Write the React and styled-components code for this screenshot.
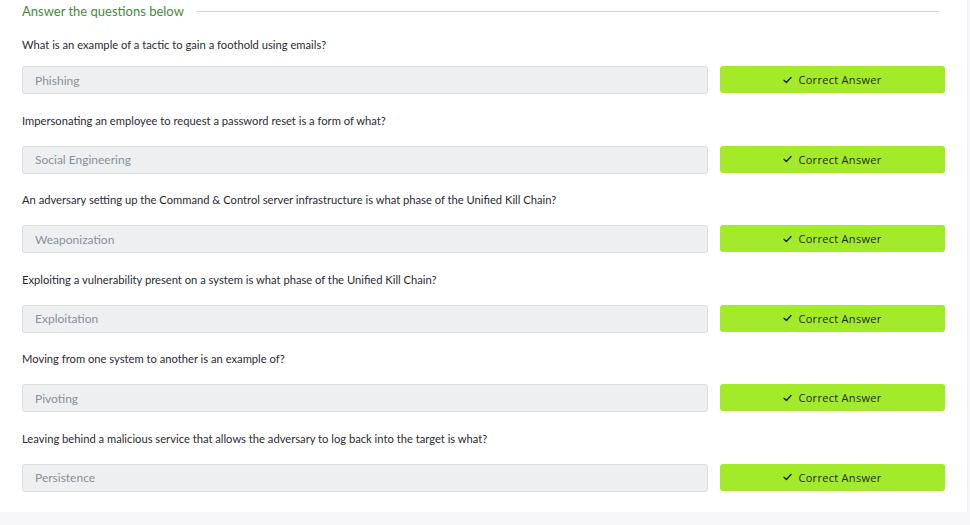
import React from 'react';
import styled, { createGlobalStyle } from 'styled-components';

const GlobalStyle = createGlobalStyle`
    html, body {
        margin: 0;
        padding: 0;
        background: #f7f7f9;
    }
    body {
        font-family: Lato, "Open Sans", sans-serif;
    }
`

const questions = [
    { q: 'What is an example of a tactic to gain a foothold using emails?', a: 'Phishing' },
    { q: 'Impersonating an employee to request a password reset is a form of what?', a: 'Social Engineering' },
    { q: 'An adversary setting up the Command & Control server infrastructure is what phase of the Unified Kill Chain?', a: 'Weaponization' },
    { q: 'Exploiting a vulnerability present on a system is what phase of the Unified Kill Chain?', a: 'Exploitation' },
    { q: 'Moving from one system to another is an example of?', a: 'Pivoting' },
    { q: 'Leaving behind a malicious service that allows the adversary to log back into the target is what?', a: 'Persistence' },
]

const Check = () => (
    <svg width="9" height="8" viewBox="0 0 9 8" fill="none">
        <path d="M1 4.2 L3.4 6.5 L8 1.5" stroke="#1d2a12" strokeWidth="1.4" strokeLinecap="round" strokeLinejoin="round" />
    </svg>
)

const App = () => {
    return (
        <>
            <GlobalStyle />
            <Card>
                <Heading>
                    <span>Answer the questions below</span>
                    <Rule />
                </Heading>

                {questions.map((item, i) => (
                    <Block key={i} $first={i === 0}>
                        <Question $first={i === 0}>{item.q}</Question>
                        <AnswerRow>
                            <AnswerField>{item.a}</AnswerField>
                            <CorrectButton>
                                <Check />
                                Correct Answer
                            </CorrectButton>
                        </AnswerRow>
                    </Block>
                ))}
            </Card>
        </>
    );
}

const Card = styled.section`
    width: 968px;
    height: 512px;
    box-sizing: border-box;
    background: #fff;
    border-right: 1px solid #f0f0f2;
    padding: 0 22px 0 22px;
`

const Heading = styled.div`
    height: 22px;
    display: flex;
    align-items: center;
    gap: 12px;
    font-size: 13px;
    color: #468a3c;

    span {
        white-space: nowrap;
    }
`

const Rule = styled.div`
    flex: 1;
    height: 1px;
    background: #d9d9d9;
    margin-right: 6px;
`

const Block = styled.div`
    padding-top: ${p => (p.$first ? '14px' : '17.5px')};
`

const Question = styled.div`
    font-size: 11.2px;
    line-height: 18px;
    color: #2b2b33;
    margin-bottom: ${p => (p.$first ? '12px' : '16px')};
`

const AnswerRow = styled.div`
    display: flex;
    gap: 12px;
`

const AnswerField = styled.div`
    flex: 1;
    height: 28px;
    box-sizing: border-box;
    background: #eeeff1;
    border: 1px solid #dcdde0;
    border-radius: 3px;
    padding: 0 12px;
    display: flex;
    align-items: center;
    font-size: 12px;
    color: #8b9099;
`

const CorrectButton = styled.div`
    width: 225px;
    height: 27px;
    background: #a3ea2a;
    border-radius: 3px;
    display: flex;
    align-items: center;
    justify-content: center;
    gap: 6px;
    font-family: "Open Sans", sans-serif;
    font-size: 11px;
    letter-spacing: 0.3px;
    color: #1d2a12;
`

export default App
